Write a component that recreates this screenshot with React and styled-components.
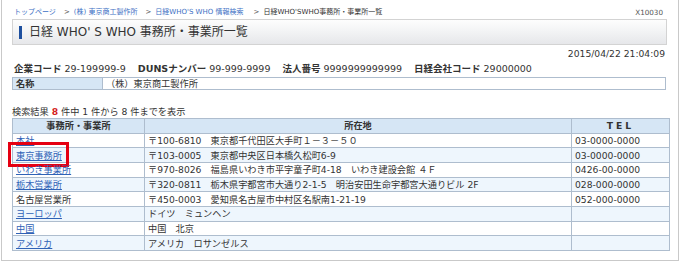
import React from "react";
import styled, { createGlobalStyle } from "styled-components";

const GlobalStyle = createGlobalStyle`
  html, body { margin: 0; padding: 0; background: #fff; }
  body {
    font-family: "DejaVu Sans", "Noto Sans CJK JP", sans-serif;
    color: #333;
  }
`;

const Frame = styled.div`
  margin-left: 1px;
  width: 678px;
  height: 261px;
  box-sizing: border-box;
  border: 1px solid #c9c9c9;
  border-top: none;
  padding: 0 11px 0 10px;
`;

const TopRow = styled.div`
  display: flex;
  align-items: center;
  justify-content: space-between;
  height: 19px;
  box-sizing: border-box;
  padding: 5px 4px 0 2px;
`;

const Crumbs = styled.div`
  display: flex;
  align-items: center;
  font-size: 7px;
  line-height: 10px;
  white-space: pre;
`;

const CrumbLink = styled.a`
  color: #3d6fc4;
  text-decoration: none;
`;

const CrumbCurrent = styled.span`
  color: #333;
`;

const Sep = styled.span`
  color: #555;
  margin: 0 ${(p) => p.$r || 4}px 0 ${(p) => p.$l || 8}px;
`;

const PageCode = styled.span`
  font-size: 7.2px;
  color: #555;
`;

const TitleBar = styled.div`
  height: 26px;
  box-sizing: border-box;
  border: 1px solid #d3d3d3;
  background: linear-gradient(to bottom, #fdfdfd 0%, #f3f4f5 45%, #e6e7ea 100%);
  display: flex;
  align-items: center;
  padding-left: 6px;
  gap: 7px;
`;

const Accent = styled.span`
  width: 3px;
  height: 13px;
  background: #1d4f9e;
`;

const Title = styled.h1`
  margin: 0;
  font-size: 12px;
  font-weight: normal;
  color: #333;
  line-height: 1;
`;

const DateRow = styled.div`
  margin-top: 3px;
  height: 12px;
  line-height: 12px;
  font-size: 9.2px;
  text-align: right;
  padding-right: 2px;
`;

const InfoLine = styled.div`
  margin-top: 3px;
  height: 12px;
  line-height: 12px;
  font-size: 9.5px;
  padding-left: 2px;
  display: flex;
  white-space: pre;
`;

const InfoItem = styled.span`
  margin-right: 12px;
`;

const InfoLabel = styled.b`
  font-weight: bold;
  margin-right: 3px;
`;

const NameTable = styled.table`
  margin-top: 2px;
  width: 654px;
  border-collapse: collapse;
  font-size: 9.2px;
  td {
    border: 1px solid #aebdce;
    height: 11px;
    line-height: 11px;
    padding: 0 3px;
  }
`;

const LabelCell = styled.td`
  width: 83px;
  background: #d6e6f5;
  font-weight: bold;
`;

const ResultLine = styled.div`
  margin-top: 16px;
  height: 12px;
  line-height: 12px;
  font-size: 9.2px;
`;

const Count = styled.b`
  color: #d41e1e;
  font-weight: bold;
`;

const ListTable = styled.table`
  width: 654px;
  border-collapse: collapse;
  font-size: 9.2px;
  table-layout: fixed;
`;

const Th = styled.th`
  background: #d6e6f5;
  border: 1px solid #aebdce;
  height: 13.67px;
  padding: 0;
  font-weight: bold;
  text-align: center;
  color: #333;
  line-height: 13px;
  letter-spacing: ${(p) => (p.$spaced ? "3px" : "0")};
  width: ${(p) => p.$w}px;
`;

const Row = styled.tr`
  background: ${(p) => (p.$alt ? "#eef6fd" : "#fff")};
`;

const Td = styled.td`
  border: 1px solid #aebdce;
  height: 13.67px;
  padding: 0 3px;
  line-height: 13px;
  white-space: nowrap;
  overflow: visible;
  position: relative;
`;

const RowLink = styled.a`
  color: #2f62b6;
  text-decoration: underline;
`;

const Highlight = styled.span`
  position: absolute;
  left: -5px;
  top: -6px;
  width: 61px;
  height: 25px;
  box-sizing: border-box;
  border: 3px solid #e50012;
  pointer-events: none;
`;

const rows = [
  { name: "本社", link: true, addr: "〒100-6810　東京都千代田区大手町１－３－５０", tel: "03-0000-0000" },
  { name: "東京事務所", link: true, addr: "〒103-0005　東京都中央区日本橋久松町6-9", tel: "03-0000-0000", mark: true },
  { name: "いわき事業所", link: true, addr: "〒970-8026　福島県いわき市平字童子町4-18　いわき建設会館 ４Ｆ", tel: "0426-00-0000" },
  { name: "栃木営業所", link: true, addr: "〒320-0811　栃木県宇都宮市大通り2-1-5　明治安田生命宇都宮大通りビル 2F", tel: "028-000-0000" },
  { name: "名古屋営業所", link: false, addr: "〒450-0003　愛知県名古屋市中村区名駅南1-21-19", tel: "052-000-0000" },
  { name: "ヨーロッパ", link: true, addr: "ドイツ　ミュンヘン", tel: "" },
  { name: "中国", link: true, addr: "中国　北京", tel: "" },
  { name: "アメリカ", link: true, addr: "アメリカ　ロサンゼルス", tel: "" },
];

export default function App() {
  return (
    <>
      <GlobalStyle />
      <Frame>
        <TopRow>
          <Crumbs>
            <CrumbLink href="#">トップページ</CrumbLink>
            <Sep>&gt;</Sep>
            <CrumbLink href="#">(株) 東京商工製作所</CrumbLink>
            <Sep>&gt;</Sep>
            <CrumbLink href="#">日経WHO'S WHO 情報検索</CrumbLink>
            <Sep $l={10}>&gt;</Sep>
            <CrumbCurrent>日経WHO'SWHO事務所・事業所一覧</CrumbCurrent>
          </Crumbs>
          <PageCode>X10030</PageCode>
        </TopRow>
        <TitleBar>
          <Accent />
          <Title>日経 WHO' S WHO 事務所・事業所一覧</Title>
        </TitleBar>
        <DateRow>2015/04/22 21:04:09</DateRow>
        <InfoLine>
          <InfoItem><InfoLabel>企業コード</InfoLabel>29-199999-9</InfoItem>
          <InfoItem><InfoLabel>DUNSナンバー</InfoLabel>99-999-9999</InfoItem>
          <InfoItem><InfoLabel>法人番号</InfoLabel>9999999999999</InfoItem>
          <InfoItem><InfoLabel>日経会社コード</InfoLabel>29000000</InfoItem>
        </InfoLine>
        <NameTable>
          <tbody>
            <tr>
              <LabelCell>名称</LabelCell>
              <td>（株）東京商工製作所</td>
            </tr>
          </tbody>
        </NameTable>
        <ResultLine>
          検索結果 <Count>8</Count> 件中 1 件から 8 件までを表示
        </ResultLine>
        <ListTable>
          <thead>
            <tr>
              <Th $w={131}>事務所・事業所</Th>
              <Th $w={426}>所在地</Th>
              <Th $w={97} $spaced>TEL</Th>
            </tr>
          </thead>
          <tbody>
            {rows.map((r, i) => (
              <Row key={r.name} $alt={i % 2 === 1}>
                <Td>
                  {r.link ? <RowLink href="#">{r.name}</RowLink> : r.name}
                  {r.mark && <Highlight />}
                </Td>
                <Td>{r.addr}</Td>
                <Td>{r.tel}</Td>
              </Row>
            ))}
          </tbody>
        </ListTable>
      </Frame>
    </>
  );
}
